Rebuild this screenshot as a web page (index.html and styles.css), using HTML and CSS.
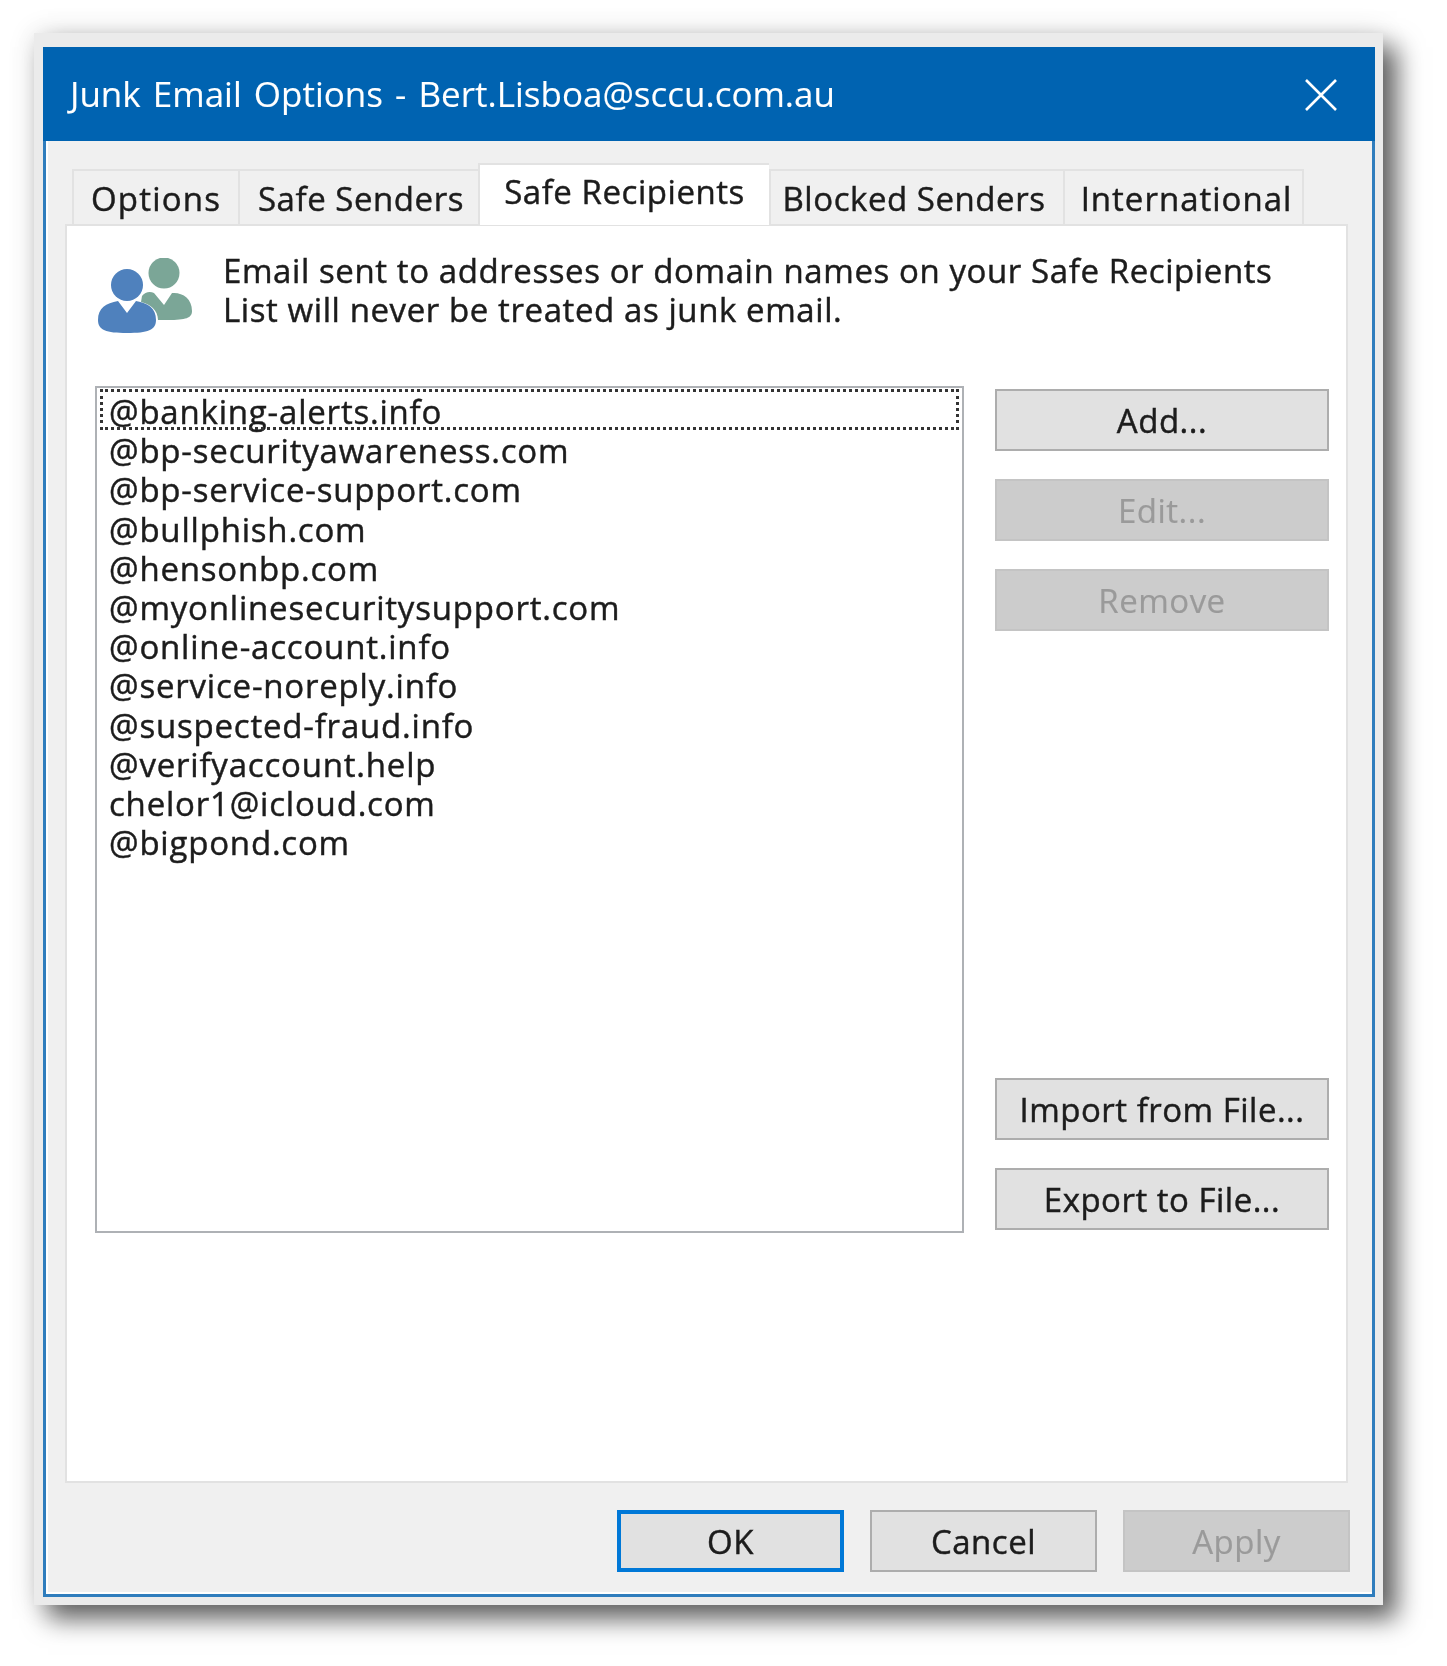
FILE: index.html
```html
<!DOCTYPE html>
<html lang="en">
<head>
<meta charset="utf-8">
<title>Junk Email Options</title>
<link rel="stylesheet" href="styles.css">
</head>
<body>
<div class="frame">
  <div class="window">
    <header class="titlebar">
      <span class="title">Junk Email Options - Bert.Lisboa@sccu.com.au</span>
      <svg class="close" viewBox="0 0 32 32" width="32" height="32"><path d="M1 1 L31 31 M31 1 L1 31" fill="none" stroke="#fff" stroke-width="2.6"/></svg>
    </header>
    <div class="body">
      <nav class="tabs">
        <div class="tab tab-options">Options</div>
        <div class="tab tab-senders">Safe Senders</div>
        <div class="tab tab-recipients active">Safe Recipients</div>
        <div class="tab tab-blocked">Blocked Senders</div>
        <div class="tab tab-intl">International</div>
      </nav>
      <section class="pane">
        <div class="intro">
          <svg class="people" viewBox="0 0 95 78" width="95" height="78">
            <circle cx="66" cy="15" r="15.5" fill="#7BA697"/>
            <path d="M44 38 C47 34 52 33 56 35 L66 47 L74 35 C84 34 94 40 94 53 C94 60 88 62 70 62 L60 62 C60 52 52 46 43 44 Z" fill="#7BA697"/>
            <circle cx="29" cy="27" r="16" fill="#4F81BD"/>
            <path d="M0 62 C0 50 8 45 20 43 L29 55 L38 43 C50 45 58 50 58 62 C58 72 50 75 29 75 C8 75 0 72 0 62 Z" fill="#4F81BD"/>
          </svg>
          <p class="intro-text">Email sent to addresses or domain names on your Safe Recipients<br>List will never be treated as junk email.</p>
        </div>
        <div class="main">
          <ul class="list">
            <li class="row focus">@banking-alerts.info</li>
            <li class="row">@bp-securityawareness.com</li>
            <li class="row">@bp-service-support.com</li>
            <li class="row">@bullphish.com</li>
            <li class="row">@hensonbp.com</li>
            <li class="row">@myonlinesecuritysupport.com</li>
            <li class="row">@online-account.info</li>
            <li class="row">@service-noreply.info</li>
            <li class="row">@suspected-fraud.info</li>
            <li class="row">@verifyaccount.help</li>
            <li class="row">chelor1@icloud.com</li>
            <li class="row">@bigpond.com</li>
          </ul>
          <div class="actions">
            <div class="group">
              <div class="btn">Add...</div>
              <div class="btn disabled">Edit...</div>
              <div class="btn disabled">Remove</div>
            </div>
            <div class="group">
              <div class="btn">Import from File...</div>
              <div class="btn">Export to File...</div>
            </div>
          </div>
        </div>
      </section>
      <footer class="footer">
        <div class="btn wide primary">OK</div>
        <div class="btn wide">Cancel</div>
        <div class="btn wide disabled">Apply</div>
      </footer>
    </div>
  </div>
</div>
</body>
</html>
```
FILE: styles.css
```css
* { box-sizing: border-box; }
html, body { margin: 0; padding: 0; background: #fff; }
body {
  width: 1447px;
  height: 1666px;
  padding: 33px 0 0 34px;
  overflow: hidden;
  font-family: "Open Sans", "Noto Sans", sans-serif;
  color: #1c1c1c;
  -webkit-text-stroke: .45px;
}
.frame {
  width: 1349px;
  height: 1572px;
  padding: 14px 8px 8px 9px;
  background: #ebebeb;
  box-shadow: 14px 14px 24px rgba(0,0,0,.6), 0 0 26px rgba(0,0,0,.12);
}
.window {
  width: 1332px;
  height: 1550px;
  display: flex;
  flex-direction: column;
  border: 3px solid #2f7dbd;
  border-top: 0;
  background: #f0f0f0;
  filter: blur(.7px);
}
.titlebar {
  height: 94px;
  margin: 0 -3px;
  flex: none;
  display: flex;
  align-items: center;
  justify-content: space-between;
  padding: 0 38px 0 27px;
  background: #0063b1;
  color: #fff;
  -webkit-text-stroke: .1px #fff;
}
.title { font-size: 35px; word-spacing: 3px; margin-top: -2px; }
.close { display: block; margin-top: 2px; }
.body {
  flex: 1;
  display: flex;
  flex-direction: column;
  padding: 22px 0 0 17px;
  border-left: 2px solid #fff;
  border-bottom: 2px solid #fff;
}
.tabs {
  display: flex;
  height: 62px;
  align-items: flex-end;
  padding-left: 7px;
  margin-bottom: -1px;
}
.tab {
  height: 56px;
  display: flex;
  align-items: center;
  justify-content: center;
  font-size: 33px;
  letter-spacing: .55px;
  background: #f0f0f0;
  border: 2px solid #e2e2e2;
  border-bottom: 0;
  border-right-width: 0;
}
.tab-options { width: 166px; letter-spacing: 1.2px; }
.tab-senders { width: 240px; padding-left: 4px; }
.tab-recipients { width: 291px; }
.tab-blocked { width: 294px; padding-right: 6px; }
.tab-intl { width: 241px; border-right-width: 2px; letter-spacing: 1px; padding-left: 6px; }
.tab.active {
  height: 62px;
  padding: 0 0 8px;
  background: #fff;
  position: relative;
  z-index: 1;
}
.pane {
  width: 1283px;
  height: 1259px;
  flex: none;
  padding: 26px 15px 0 28px;
  background: #fff;
  border: 2px solid #e2e2e2;
}
.intro { display: flex; align-items: flex-start; height: 134px; }
.people { flex: none; margin: 6px 30px 0 3px; display: block; }
.intro-text { margin: -1px 0 0; font-size: 33px; line-height: 39px; letter-spacing: .59px; white-space: nowrap; }
.main { display: flex; gap: 31px; height: 847px; }
.list {
  width: 869px;
  margin: 0;
  padding: 2px 0 0;
  list-style: none;
  border: 2px solid #aeb1b5;
  background: #fff;
}
.row {
  height: 39.2px;
  padding: 2px 0 0 12px;
  font-size: 33px;
  line-height: 39px;
  letter-spacing: .8px;
  white-space: nowrap;
}
.row.focus {
  margin: 0 4px;
  padding-left: 8px;
  outline: 3px dotted #333;
  outline-offset: -2px;
}
.actions {
  width: 334px;
  padding-top: 3px;
  display: flex;
  flex-direction: column;
  justify-content: space-between;
  padding-bottom: 3px;
}
.group { display: flex; flex-direction: column; gap: 28px; }
.btn {
  height: 62px;
  display: flex;
  align-items: center;
  justify-content: center;
  font-size: 33px;
  letter-spacing: .5px;
  background: #e1e1e1;
  border: 2px solid #adadad;
  white-space: nowrap;
}
.btn.disabled { background: #ccc; border-color: #c4c4c4; color: #9a9a9a; -webkit-text-stroke: .2px #9a9a9a; }
.btn.primary { border: 4px solid #0078d7; }
.footer {
  display: flex;
  justify-content: flex-end;
  gap: 26px;
  padding: 27px 22px 0 0;
}
.wide { width: 227px; }
```
